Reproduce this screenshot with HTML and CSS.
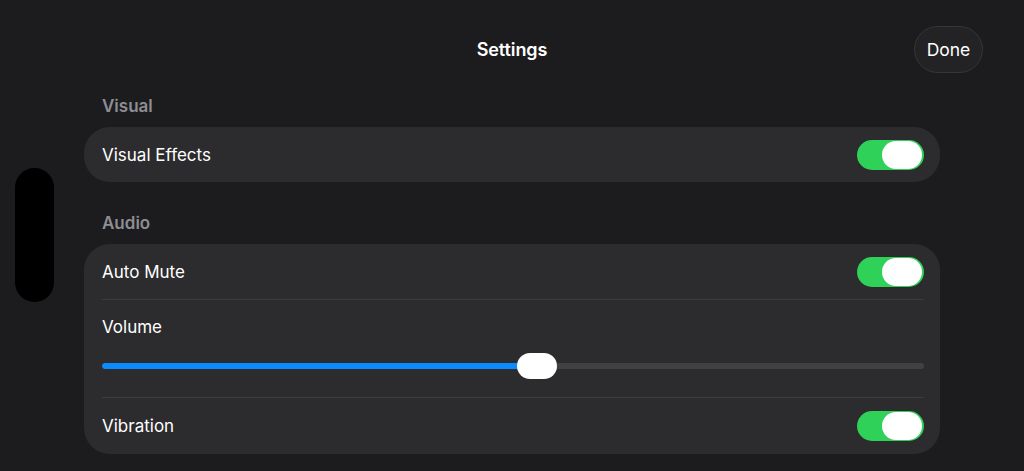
FILE: index.html
```html
<!DOCTYPE html>
<html lang="en">
<head>
<meta charset="utf-8">
<title>Settings</title>
<link rel="stylesheet" href="styles.css">
</head>
<body>
<div class="island"></div>
<div class="page">
  <header class="topbar">
    <div></div>
    <h1 class="title">Settings</h1>
    <button class="done">Done</button>
  </header>
  <main class="content">
    <h2 class="section-title first">Visual</h2>
    <section class="card">
      <div class="row">
        <span class="label">Visual Effects</span>
        <span class="toggle"><span class="knob"></span></span>
      </div>
    </section>
    <h2 class="section-title">Audio</h2>
    <section class="card">
      <div class="row">
        <span class="label">Auto Mute</span>
        <span class="toggle"><span class="knob"></span></span>
      </div>
      <div class="row-volume">
        <span class="label">Volume</span>
        <div class="slider">
          <div class="track"><div class="fill" style="width:52.9%"></div></div>
          <div class="thumb" style="left:calc(52.9% - 20px)"></div>
        </div>
      </div>
      <div class="row divided">
        <span class="label">Vibration</span>
        <span class="toggle"><span class="knob"></span></span>
      </div>
    </section>
  </main>
</div>
</body>
</html>
```
FILE: styles.css
```css
* { box-sizing: border-box; }
html, body {
  margin: 0;
  padding: 0;
  background: #1c1c1e;
  height: 471px;
  overflow: hidden;
}
body {
  font-family: Inter, "Noto Sans", "Liberation Sans", sans-serif;
  color: #fff;
  position: relative;
}
.island {
  position: absolute;
  left: 15px;
  top: 168px;
  width: 39px;
  height: 134px;
  border-radius: 20px;
  background: #000;
}
.page {
  padding-top: 26px;
}
.topbar {
  display: grid;
  grid-template-columns: 1fr auto 1fr;
  align-items: center;
  height: 47px;
}
.title {
  margin: 0;
  font-size: 18px;
  font-weight: 600;
  line-height: 22px;
  letter-spacing: -0.1px;
}
.done {
  justify-self: end;
  margin-right: 41px;
  width: 69px;
  height: 47px;
  border-radius: 24px;
  background: #232325;
  border: 1px solid #36363a;
  color: #fff;
  font-family: inherit;
  font-size: 17.5px;
  font-weight: 400;
  padding: 0;
}
.content {
  width: 856px;
  margin: 0 auto;
}
.section-title {
  margin: 30px 0 10px;
  padding-left: 18px;
  font-size: 17px;
  font-weight: 600;
  line-height: 22px;
  color: #8d8d93;
}
.section-title.first {
  margin-top: 22px;
}
.card {
  background: #2c2c2e;
  border-radius: 26px;
  padding: 0 16px 0 18px;
}
.row {
  height: 55px;
  display: flex;
  align-items: center;
  justify-content: space-between;
}
.row.divided {
  height: 57px;
  border-top: 1px solid #3d3d40;
}
.label {
  font-size: 17px;
  line-height: 22px;
  font-weight: 400;
  color: #fff;
}
.toggle {
  width: 67px;
  height: 30px;
  border-radius: 15px;
  background: #30d158;
  display: flex;
  justify-content: flex-end;
  align-items: center;
  padding: 1px 2px;
}
.knob {
  width: 40px;
  height: 28px;
  border-radius: 14px;
  background: #fff;
}
.row-volume {
  border-top: 1px solid #3d3d40;
  padding: 16px 0 18px;
  display: flex;
  flex-direction: column;
  gap: 15px;
}
.slider {
  position: relative;
  height: 26px;
  display: flex;
  align-items: center;
}
.track {
  width: 100%;
  height: 6px;
  border-radius: 3px;
  background: #414144;
  overflow: hidden;
}
.fill {
  height: 100%;
  background: #0a8cff;
  border-radius: 3px;
}
.thumb {
  position: absolute;
  top: 0;
  width: 40px;
  height: 26px;
  border-radius: 13px;
  background: #fff;
}
```
